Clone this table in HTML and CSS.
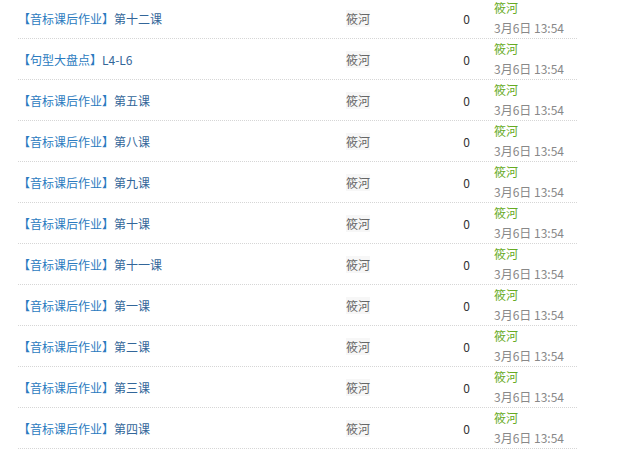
FILE: index.html
```html
<!DOCTYPE html>
<html lang="zh-CN">
<head>
  <meta charset="UTF-8">
  <meta name="viewport" content="width=device-width, initial-scale=1.0">
  <title>作业列表</title>
  <link rel="stylesheet" href="styles.css">
</head>
<body>
  <div class="topic-list">
    <div class="topic-row">
      <div class="topic-title"><a href="#"><span class="tag">【音标课后作业】</span>第十二课</a></div>
      <div class="topic-author"><span>筱河</span></div>
      <div class="topic-count">0</div>
      <div class="topic-last"><a href="#">筱河</a><span>3月6日 13:54</span></div>
    </div>
    <div class="topic-row">
      <div class="topic-title"><a href="#"><span class="tag">【句型大盘点】</span>L4-L6</a></div>
      <div class="topic-author"><span>筱河</span></div>
      <div class="topic-count">0</div>
      <div class="topic-last"><a href="#">筱河</a><span>3月6日 13:54</span></div>
    </div>
    <div class="topic-row">
      <div class="topic-title"><a href="#"><span class="tag">【音标课后作业】</span>第五课</a></div>
      <div class="topic-author"><span>筱河</span></div>
      <div class="topic-count">0</div>
      <div class="topic-last"><a href="#">筱河</a><span>3月6日 13:54</span></div>
    </div>
    <div class="topic-row">
      <div class="topic-title"><a href="#"><span class="tag">【音标课后作业】</span>第八课</a></div>
      <div class="topic-author"><span>筱河</span></div>
      <div class="topic-count">0</div>
      <div class="topic-last"><a href="#">筱河</a><span>3月6日 13:54</span></div>
    </div>
    <div class="topic-row">
      <div class="topic-title"><a href="#"><span class="tag">【音标课后作业】</span>第九课</a></div>
      <div class="topic-author"><span>筱河</span></div>
      <div class="topic-count">0</div>
      <div class="topic-last"><a href="#">筱河</a><span>3月6日 13:54</span></div>
    </div>
    <div class="topic-row">
      <div class="topic-title"><a href="#"><span class="tag">【音标课后作业】</span>第十课</a></div>
      <div class="topic-author"><span>筱河</span></div>
      <div class="topic-count">0</div>
      <div class="topic-last"><a href="#">筱河</a><span>3月6日 13:54</span></div>
    </div>
    <div class="topic-row">
      <div class="topic-title"><a href="#"><span class="tag">【音标课后作业】</span>第十一课</a></div>
      <div class="topic-author"><span>筱河</span></div>
      <div class="topic-count">0</div>
      <div class="topic-last"><a href="#">筱河</a><span>3月6日 13:54</span></div>
    </div>
    <div class="topic-row">
      <div class="topic-title"><a href="#"><span class="tag">【音标课后作业】</span>第一课</a></div>
      <div class="topic-author"><span>筱河</span></div>
      <div class="topic-count">0</div>
      <div class="topic-last"><a href="#">筱河</a><span>3月6日 13:54</span></div>
    </div>
    <div class="topic-row">
      <div class="topic-title"><a href="#"><span class="tag">【音标课后作业】</span>第二课</a></div>
      <div class="topic-author"><span>筱河</span></div>
      <div class="topic-count">0</div>
      <div class="topic-last"><a href="#">筱河</a><span>3月6日 13:54</span></div>
    </div>
    <div class="topic-row">
      <div class="topic-title"><a href="#"><span class="tag">【音标课后作业】</span>第三课</a></div>
      <div class="topic-author"><span>筱河</span></div>
      <div class="topic-count">0</div>
      <div class="topic-last"><a href="#">筱河</a><span>3月6日 13:54</span></div>
    </div>
    <div class="topic-row">
      <div class="topic-title"><a href="#"><span class="tag">【音标课后作业】</span>第四课</a></div>
      <div class="topic-author"><span>筱河</span></div>
      <div class="topic-count">0</div>
      <div class="topic-last"><a href="#">筱河</a><span>3月6日 13:54</span></div>
    </div>
  </div>
</body>
</html>
```

FILE: styles.css
```css
body {
  margin: 0;
  font-family: "Noto Sans CJK SC", sans-serif;
  font-size: 12px;
  color: #333;
  background: #fff;
}
.topic-list {
  width: 559px;
  margin: -2px 0 0 18px;
}
.topic-row {
  display: grid;
  grid-template-columns: 328px 80px 50px 1fr;
  align-items: center;
  height: 40px;
  border-bottom: 1px dotted #d6d6d6;
  white-space: nowrap;
}
.topic-title a {
  color: #336699;
  text-decoration: none;
}
.topic-title .tag {
  color: #2b7bc0;
}
.topic-author span {
  color: #666;
  background: #f7f7f7;
}
.topic-count {
  text-align: right;
  padding-right: 6px;
}
.topic-last {
  display: flex;
  flex-direction: column;
  align-items: flex-start;
  line-height: 20px;
  padding-left: 18px;
}
.topic-last a {
  color: #66aa22;
  text-decoration: none;
}
.topic-last span {
  color: #888;
}
```
